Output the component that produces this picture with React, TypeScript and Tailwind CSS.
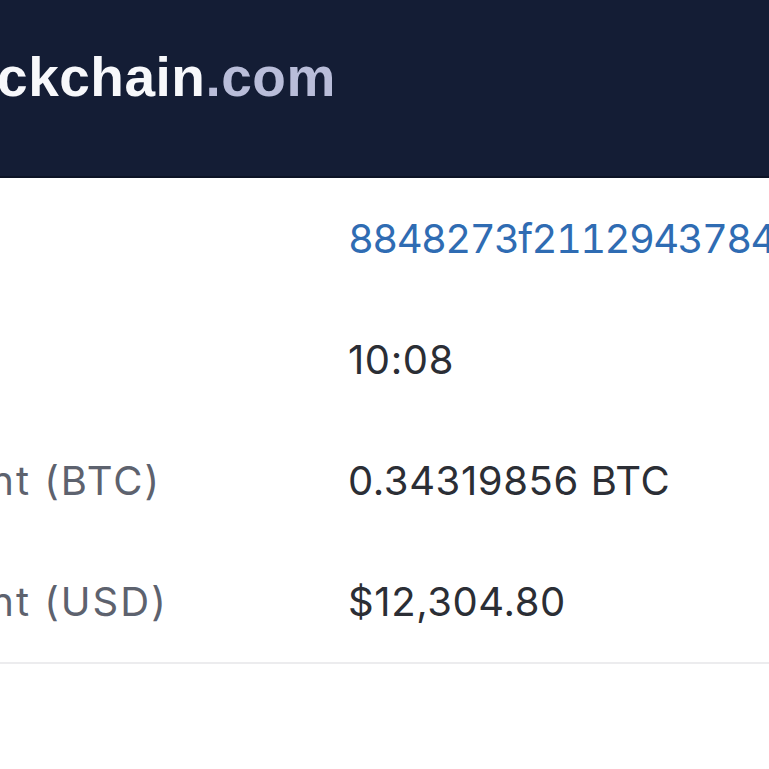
const rows = [
  { label: "Hash", value: "8848273f2112943784a6c1d2e0b7f59", link: true },
  { label: "Time", value: "10:08" },
  { label: "Amount (BTC)", value: "0.34319856 BTC" },
  { label: "Amount (USD)", value: "$12,304.80" },
];

export default function App() {
  return (
    <div className="w-[769px] h-[769px] overflow-hidden bg-white font-['Inter',sans-serif]">
      <header className="h-[178px] bg-[#141d35] border-b-2 border-[#0c1325] pt-[50px]">
        <h1 className="ml-[-93px] text-[55px] leading-none font-bold tracking-[0.5px] whitespace-nowrap text-[#f7f8fb] font-['Liberation_Sans',Arial,sans-serif]">
          Blockchain<span className="text-[#b9bdd9]">.com</span>
        </h1>
      </header>
      <div className="ml-[-128px] border-b-2 border-[#ececee]">
        {rows.map((row) => (
          <div key={row.label} className="h-[121px] flex items-center whitespace-nowrap text-[40px]">
            <div className="w-[476px] shrink-0 tracking-[2px] text-[#5d626e]">{row.label}</div>
            <div
              className={
                row.link
                  ? "tabular-nums tracking-[-1.6px] text-[#2f6cb3]"
                  : "tracking-[0.6px] text-[#2b2e35]"
              }
            >
              {row.value}
            </div>
          </div>
        ))}
      </div>
    </div>
  );
}
